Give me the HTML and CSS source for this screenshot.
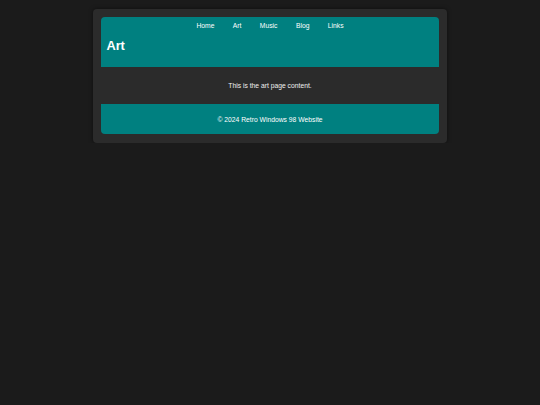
FILE: index.html
```html
<!DOCTYPE html>
<html lang="en">
<head>
<meta charset="utf-8">
<title>Art</title>
<link rel="stylesheet" href="styles.css">
</head>
<body>
<div class="window">
  <header class="site-header">
    <nav class="nav">
      <a href="#">Home</a>
      <a href="#">Art</a>
      <a href="#">Music</a>
      <a href="#">Blog</a>
      <a href="#">Links</a>
    </nav>
    <h1 class="title">Art</h1>
  </header>
  <main class="content">
    <p>This is the art page content.</p>
  </main>
  <footer class="site-footer">
    <p>&copy; 2024 Retro Windows 98 Website</p>
  </footer>
</div>
</body>
</html>
```

FILE: styles.css
```css
html, body {
  margin: 0;
  padding: 0;
}
body {
  background: #1b1b1b;
  font-family: "Liberation Sans", Arial, sans-serif;
  font-size: 6.75px;
  color: #f0f0f0;
  padding-top: 9px;
}
.window {
  box-sizing: border-box;
  width: 354px;
  margin: 0 auto;
  padding: 8px 8px 9px;
  background: #2b2b2b;
  border-radius: 4px;
  box-shadow: 0 0 4px rgba(0, 0, 0, 0.5);
}
.site-header {
  background: #008080;
  border-radius: 4px 4px 0 0;
  height: 50px;
  box-sizing: border-box;
  padding: 4.6px 5.4px 0;
}
.nav {
  display: flex;
  justify-content: center;
  line-height: 8px;
}
.nav a {
  color: #ffffff;
  text-decoration: none;
  margin: 0 9.2px;
}
.title {
  margin: 8px 0 0;
  font-size: 12.8px;
  line-height: 15px;
  font-weight: bold;
  color: #ffffff;
}
.content {
  padding: 15.4px 0 13.9px;
  text-align: center;
}
.content p, .site-footer p {
  margin: 0;
  line-height: 8px;
}
.site-footer {
  background: #008080;
  border-radius: 0 0 4px 4px;
  text-align: center;
  padding: 11.4px 0 10.6px;
  color: #ffffff;
}
```
